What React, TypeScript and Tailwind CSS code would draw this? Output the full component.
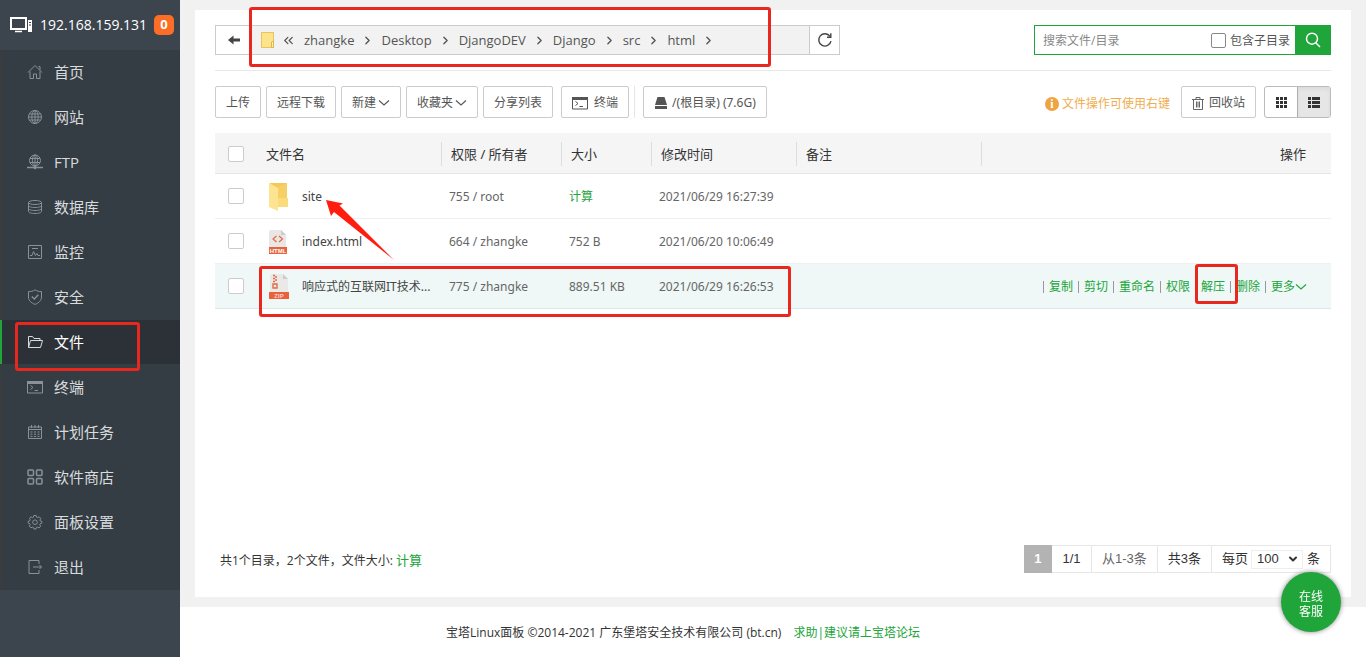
import { ReactNode } from "react";
import { ChevronDown, ChevronRight, ChevronsLeft } from "lucide-react";
import clsx from "clsx";

type IconProps = { className?: string; children?: ReactNode };

const LineIcon: React.FC<IconProps> = ({ className, children }) => (
  <svg
    viewBox="0 0 16 16"
    fill="none"
    stroke="currentColor"
    className={clsx("h-4 w-4 shrink-0", className)}
    aria-hidden="true"
  >
    {children}
  </svg>
);

const HomeIcon = () => (
  <LineIcon>
    <path d="M1 8.5 8 1.5l7 7M3 7.5v7h3.5V10h3v4.5H13v-7M11.5 2.5H13V6" />
  </LineIcon>
);

const GlobeIcon = () => (
  <LineIcon>
    <circle cx="8" cy="8" r="6.5" />
    <ellipse cx="8" cy="8" rx="3.2" ry="6.5" />
    <path d="M8 1.5v13M1.5 8h13M2.5 5h11M2.5 11h11" />
  </LineIcon>
);

const FtpIcon = () => (
  <LineIcon>
    <circle cx="8" cy="6.5" r="5.5" />
    <ellipse cx="8" cy="6.5" rx="2.6" ry="5.5" />
    <path d="M8 1v12M3 4.500h10M3 8.500h10" />
    <path d="M0 13.500h16" strokeWidth="1.500" />
    <circle cx="8" cy="13.500" r="1.300" fill="currentColor" />
  </LineIcon>
);

const DatabaseIcon = () => (
  <LineIcon>
    <ellipse cx="8" cy="3.500" rx="6.500" ry="2" />
    <path d="M1.500 3.500v9c0 1.200 3 2 6.500 2s6.500-.8 6.500-2v-9M1.500 6.500c0 1.200 3 2 6.500 2s6.500-.8 6.500-2M1.500 9.500c0 1.200 3 2 6.500 2s6.500-.8 6.500-2" />
  </LineIcon>
);

const MonitorIcon = () => (
  <LineIcon>
    <path d="M1.500 1.500h13v13h-13zM5 4.500h6M3 11.500h2l1.500-4 2 4 1.500-2 1 2h2" />
  </LineIcon>
);

const ShieldIcon = () => (
  <LineIcon>
    <path d="M8 .8C6 2.200 4 2.600 1.500 2.600V8c0 3.500 2.500 5.800 6.500 7.400 4-1.600 6.500-3.900 6.500-7.400V2.600C12 2.600 10 2.200 8 .8z" />
    <path d="m4.800 7.600 2.500 2.400 4-4.300" strokeWidth="1.400" />
  </LineIcon>
);

const FolderOpenIcon = () => (
  <LineIcon>
    <path d="M1.500 13.500v-11h4l1.500 2h6v2M1.500 13.500l2-7h12l-2 7z" />
  </LineIcon>
);

const TerminalIcon: React.FC<IconProps> = ({ className }) => (
  <LineIcon className={className}>
    <path d="M.5 2.500h15v11.500H.5z" />
    <path d="M0 3.500h16" strokeWidth="3" />
    <path d="m3.500 6.500 2.500 2-2.500 2M7.500 11.500H11" />
  </LineIcon>
);

const CalendarIcon = () => (
  <LineIcon>
    <path d="M1.500 3h13v11.500h-13zM1.500 5.500h13M4.500 1v3M8 1v3M11.500 1v3" />
    <path d="M3.500 8h9M3.500 10.200h9M3.500 12.400h9" strokeDasharray="2 1.500" />
  </LineIcon>
);

const AppsIcon = () => (
  <LineIcon>
    <g strokeWidth="1.500">
      <rect x="1" y="1" width="5.500" height="5.500" rx="1" />
      <rect x="9.500" y="1" width="5.500" height="5.500" rx="1" />
      <rect x="1" y="9.500" width="5.500" height="5.500" rx="1" />
      <rect x="9.500" y="9.500" width="5.500" height="5.500" rx="1" />
    </g>
  </LineIcon>
);

const GearIcon = () => (
  <LineIcon>
    <path d="M6.800 1.500h2.400l.4 1.700 1 .5 1.600-.9 1.600 1.700-.9 1.500.4 1 1.500.4v1.700l-1.600.6-.4 1 .8 1.600-1.500 1.600-1.600-.9-1 .4-.5 1.600H6.900l-.4-1.600-1.100-.4-1.500.8-1.600-1.600.9-1.500-.5-1.100-1.500-.5V7.300l1.600-.5.400-1-.8-1.500L4 2.800l1.500.8 1-.4z" />
    <circle cx="8" cy="8.200" r="2.300" />
  </LineIcon>
);

const ExitIcon = () => (
  <LineIcon>
    <path d="M12 5V1.500H2v13h10V11M6 8h8.500M12.500 6l2 2-2 2" />
  </LineIcon>
);

const ServerIcon = () => (
  <svg viewBox="0 0 24 18" className="h-[18px] w-6 shrink-0" aria-hidden="true">
    <rect x="1" y="2" width="15" height="11" fill="none" stroke="white" strokeWidth="2" />
    <path d="M5 15.500h7" stroke="white" strokeWidth="1.500" />
    <rect x="18" y="4" width="4" height="12" fill="white" />
    <path d="M19 6.500h2M19 9h2" stroke="#3c444d" />
  </svg>
);

const CaretIcon: React.FC<IconProps> = ({ className }) => (
  <svg
    viewBox="0 0 12 12"
    fill="none"
    stroke="currentColor"
    strokeWidth="1.100"
    className={clsx("h-3 w-3 shrink-0", className)}
    aria-hidden="true"
  >
    <path d="m1 3.500 5 4.500 5-4.500" />
  </svg>
);

const TrashIcon = () => (
  <svg viewBox="0 0 12 14" fill="none" stroke="#666" className="h-[14px] w-3" aria-hidden="true">
    <path d="M0 3.500h12M4 3.500v-2h4v2M1.500 3.500v10h9v-10M4.500 5.500v6M6 5.500v6M7.500 5.500v6" />
  </svg>
);

const DiskIcon = () => (
  <svg viewBox="0 0 14 14" fill="#555" className="h-[14px] w-[14px]" aria-hidden="true">
    <path d="M3.500 1h7L13 9H1zM1 10h12v3H1z" />
  </svg>
);

const RefreshIcon = () => (
  <svg viewBox="0 0 16 16" fill="none" stroke="#444" strokeWidth="1.400" className="h-4 w-4" aria-hidden="true">
    <path d="M14 9.200A6.200 6.200 0 1 1 13 4.300" />
    <path d="M13.800 1.300v3.900H10" />
  </svg>
);

const BackIcon = () => (
  <svg viewBox="0 0 12 10" fill="#444" className="h-[10px] w-3" aria-hidden="true">
    <path d="M0 5 5.500.5v3H12v3H5.500v3z" />
  </svg>
);

const SearchIcon = () => (
  <svg viewBox="0 0 16 16" fill="none" stroke="white" strokeWidth="1.500" className="h-4 w-4" aria-hidden="true">
    <circle cx="7" cy="6.700" r="5.500" />
    <path d="m11 11 4 4" />
  </svg>
);

const SmallFolderIcon = () => (
  <svg viewBox="0 0 13 16" className="h-4 w-[13px] shrink-0" aria-hidden="true">
    <rect x=".5" y=".5" width="12" height="15" fill="#fde38c" stroke="#e9c45b" />
    <path d="M10.500 15.500V10l2-1v6.500z" fill="#fff0b5" stroke="#dfb64b" />
  </svg>
);

const FolderIcon = () => (
  <svg viewBox="0 0 20 28" className="h-7 w-5" aria-hidden="true">
    <path d="M1 0h17v16h1v8H5z" fill="#f3c95a" />
    <path d="M9 4 18 0v16H9z" fill="#f6cf66" />
    <path d="M9 15h10v9H9z" fill="#fbdc7c" />
    <path d="M0 0 9 5v23l-9-4z" fill="#fde491" />
  </svg>
);

const HtmlFileIcon = () => (
  <svg viewBox="0 0 18 24" className="h-6 w-[18px]" aria-hidden="true">
    <path d="M0 2a2 2 0 0 1 2-2h10l5 5v12H0z" fill="#e9e7e6" />
    <path d="M12 0v5h5z" fill="#cfcccb" />
    <path d="M7.500 6 4 9l3.500 3M10 6l3.500 3-3.500 3" fill="none" stroke="#e66a45" strokeWidth="1.200" />
    <path d="M0 17h18v7H0z" fill="#e8623c" />
    <text x="9" y="23" textAnchor="middle" fontSize="6" fontWeight="700" fill="white" fontFamily="Liberation Sans, sans-serif">
      HTML
    </text>
  </svg>
);

const ZipFileIcon = () => (
  <svg viewBox="0 0 20 26" className="h-[26px] w-5" aria-hidden="true">
    <path d="M1 2a2 2 0 0 1 2-2h11l5 5v14H1z" fill="#e9e9e7" />
    <path d="M14 0v5h5z" fill="#cfcccb" />
    <path d="M4 1.500h2M6 3h2M4 4.500h2M6 6h2M4 7.500h2M4 10h4v4H4z" fill="none" stroke="#e66a45" strokeWidth="1.400" />
    <path d="M0 18h20v7H0z" fill="#e8623c" />
    <text x="10" y="24" textAnchor="middle" fontSize="6" fontWeight="700" fill="#fbd5c8" fontFamily="Liberation Sans, sans-serif">
      ZIP
    </text>
  </svg>
);

const Mark: React.FC<{ className: string }> = ({ className }) => (
  <div
    className={clsx(
      "pointer-events-none absolute z-10 rounded-[3px] border-3 border-[#e8281f]",
      className
    )}
  />
);

const menu = [
  { label: "首页", icon: <HomeIcon /> },
  { label: "网站", icon: <GlobeIcon /> },
  { label: "FTP", icon: <FtpIcon /> },
  { label: "数据库", icon: <DatabaseIcon /> },
  { label: "监控", icon: <MonitorIcon /> },
  { label: "安全", icon: <ShieldIcon /> },
  { label: "文件", icon: <FolderOpenIcon />, active: true },
  { label: "终端", icon: <TerminalIcon /> },
  { label: "计划任务", icon: <CalendarIcon /> },
  { label: "软件商店", icon: <AppsIcon /> },
  { label: "面板设置", icon: <GearIcon /> },
  { label: "退出", icon: <ExitIcon /> },
];

const Sidebar = () => (
  <aside className="w-[180px] shrink-0 bg-[#3c444d]">
    <div className="flex h-[50px] items-center pl-[10px] text-white">
      <ServerIcon />
      <span className="ml-[6px] w-[108px] text-sm">192.168.159.131</span>
      <span className="ml-[6px] flex h-5 w-5 items-center justify-center rounded-[5px] bg-[#fc6d26] text-[13px] font-bold">
        0
      </span>
    </div>
    <nav className="border-l-2 border-[#3a3d40] bg-[#353d44]">
      {menu.map((item) => (
        <div key={item.label} className="relative -ml-[2px] h-[45px]">
          <a
            href="#"
            className={clsx(
              "flex h-11 items-center gap-[11px] border-l-2 pl-[25px] text-[15px]",
              item.active
                ? "border-[#20a53a] bg-[#2c3138] text-white"
                : "border-transparent text-[#d8dbde]"
            )}
          >
            <span className={item.active ? "text-[#d8dbde]" : "text-[#8a9198]"}>
              {item.icon}
            </span>
            {item.label}
          </a>
          {item.active && <Mark className="top-[2px] left-[15px] h-[49px] w-[125px]" />}
        </div>
      ))}
    </nav>
  </aside>
);

const crumbs = ["zhangke", "Desktop", "DjangoDEV", "Django", "src", "html"];

const PathBar = () => (
  <div className="flex items-center justify-between border-b border-[#e8e8e8] pb-[15px]">
    <div className="relative flex h-[30px] w-[625px] border border-[#ccc]">
      <button aria-label="返回" className="flex w-9 items-center justify-center border-r border-[#ccc]">
        <BackIcon />
      </button>
      <div className="flex flex-1 items-center bg-[#f2f2f2] pl-[9px] text-[13px] text-[#555]">
        <SmallFolderIcon />
        <ChevronsLeft className="mr-2 ml-[7px] h-[15px] w-[15px]" />
        {crumbs.map((name) => (
          <span key={name} className="flex items-center">
            <a href="#" className="pt-px">
              {name}
            </a>
            <ChevronRight className="mx-[7px] h-[13px] w-[13px]" strokeWidth={2.5} />
          </span>
        ))}
      </div>
      <button aria-label="刷新" className="flex w-[30px] items-center justify-center border-l border-[#ccc]">
        <RefreshIcon />
      </button>
      <Mark className="-top-[19px] left-[33px] h-[60px] w-[522px]" />
    </div>

    <form className="flex h-[30px] w-[297px]">
      <div className="flex min-w-0 flex-1 items-center border border-r-0 border-[#20a53a] pr-[5px]">
        <input
          type="text"
          aria-label="搜索文件/目录"
          placeholder="搜索文件/目录"
          className="min-w-0 flex-1 pt-[2px] pl-2 text-xs outline-none placeholder:text-[#888]"
        />
        <input
          id="subdir"
          type="checkbox"
          className="h-[15px] w-[15px] appearance-none rounded-[2px] border border-[#888] bg-white"
        />
        <label htmlFor="subdir" className="ml-1 pt-[2px] text-xs text-[#555]">
          包含子目录
        </label>
      </div>
      <button type="button" aria-label="搜索" className="flex w-9 items-center justify-center bg-[#20a53a]">
        <SearchIcon />
      </button>
    </form>
  </div>
);

const ToolButton: React.FC<{ children: ReactNode; className?: string }> = ({
  children,
  className,
}) => (
  <button
    className={clsx(
      "flex h-8 items-center rounded-[2px] border border-[#ccc] bg-white px-[10px] pt-px text-xs whitespace-nowrap text-[#555]",
      className
    )}
  >
    {children}
  </button>
);

const GridIcon = () => (
  <svg viewBox="0 0 11 11" fill="#333" className="h-[11px] w-[11px]" aria-hidden="true">
    <path d="M0 0h3v3H0zM4 0h3v3H4zM8 0h3v3H8zM0 4h3v3H0zM4 4h3v3H4zM8 4h3v3H8zM0 8h3v3H0zM4 8h3v3H4zM8 8h3v3H8z" />
  </svg>
);

const ListIcon = () => (
  <svg viewBox="0 0 12 11" fill="#333" className="h-[11px] w-3" aria-hidden="true">
    <path d="M0 0h3v3H0zM4 0h8v3H4zM0 4h3v3H0zM4 4h8v3H4zM0 8h3v3H0zM4 8h8v3H4z" />
  </svg>
);

const Toolbar = () => (
  <div className="flex justify-between pt-[15px] pb-[15px]">
    <div className="flex items-center">
      <div className="flex gap-[5px]">
        <ToolButton>上传</ToolButton>
        <ToolButton>远程下载</ToolButton>
        <ToolButton>
          新建
          <CaretIcon className="ml-[2px]" />
        </ToolButton>
        <ToolButton>
          收藏夹
          <CaretIcon className="ml-[2px]" />
        </ToolButton>
        <ToolButton>分享列表</ToolButton>
      </div>
      <ToolButton className="ml-2">
        <TerminalIcon className="mr-[6px]" />
        终端
      </ToolButton>
      <div className="mr-2 ml-[5px] h-8 w-px bg-[#e6e6e6]" />
      <ToolButton>
        <DiskIcon />
        <span className="ml-1 font-['Noto_Sans','Noto_Sans_CJK_SC',sans-serif]">/(根目录) (7.6G)</span>
      </ToolButton>
    </div>
    <div className="flex items-center">
      <span className="flex items-center gap-[3px] pt-[3px] text-xs text-[#f0ad4e]">
        <span className="flex h-[14px] w-[14px] items-center justify-center rounded-full bg-[#f0a341] font-['Liberation_Serif',serif] text-[12px] font-bold text-white">
          i
        </span>
        文件操作可使用右键
      </span>
      <ToolButton className="ml-[11px] gap-[5px]">
        <TrashIcon />
        回收站
      </ToolButton>
      <div className="ml-2 flex h-8 overflow-hidden rounded-[3px] border border-[#bbb]">
        <button aria-label="图标视图" className="flex w-8 items-center justify-center">
          <GridIcon />
        </button>
        <button
          aria-label="列表视图"
          className="flex w-[33px] items-center justify-center border-l border-[#adadad] bg-[#e6e6e6] inset-shadow-sm"
        >
          <ListIcon />
        </button>
      </div>
    </div>
  </div>
);

type FileRow = {
  name: string;
  icon: ReactNode;
  owner: string;
  size: ReactNode;
  time: string;
  hovered?: boolean;
};

const files: FileRow[] = [
  {
    name: "site",
    icon: <FolderIcon />,
    owner: "755 / root",
    size: (
      <a href="#" className="text-[#20a53a]">
        计算
      </a>
    ),
    time: "2021/06/29 16:27:39",
  },
  {
    name: "index.html",
    icon: <HtmlFileIcon />,
    owner: "664 / zhangke",
    size: "752 B",
    time: "2021/06/20 10:06:49",
  },
  {
    name: "响应式的互联网IT技术...",
    icon: <ZipFileIcon />,
    owner: "775 / zhangke",
    size: "889.51 KB",
    time: "2021/06/29 16:26:53",
    hovered: true,
  },
];

const actions = ["复制", "剪切", "重命名", "权限", "解压", "删除", "更多"];

const Check: React.FC<{ label: string }> = ({ label }) => (
  <input
    type="checkbox"
    aria-label={label}
    className="block h-4 w-4 appearance-none rounded-[2px] border border-[#ccc] bg-white"
  />
);

const HeadCell: React.FC<{ children?: ReactNode; className?: string }> = ({
  children,
  className,
}) => (
  <th className="p-0 pt-[3px] font-normal">
    <div className={clsx("h-6 border-l border-[#ddd] pl-[9px] text-left leading-6", className)}>
      {children}
    </div>
  </th>
);

const RowActions = () => (
  <div className="flex items-center justify-end">
    {actions.map((action) => (
      <span key={action} className="relative flex items-center">
        <span className="mx-[5px] h-3 w-px bg-[#999]" />
        <a href="#" className="flex items-center text-[#20a53a]">
          {action}
          {action === "更多" && <CaretIcon />}
        </a>
        {action === "解压" && <Mark className="-top-[15px] left-[5px] h-10 w-[43px]" />}
      </span>
    ))}
  </div>
);

const FileTable = () => (
  <div className="relative">
    <table className="w-full table-fixed border-collapse font-['Noto_Sans','Noto_Sans_CJK_SC',sans-serif] text-xs text-[#666]">
      <colgroup>
        <col className="w-[41px]" />
        <col className="w-[185px]" />
        <col className="w-[120px]" />
        <col className="w-[90px]" />
        <col className="w-[145px]" />
        <col className="w-[185px]" />
        <col />
      </colgroup>
      <thead>
        <tr className="h-10 border-b border-[#e6e6e6] bg-[#f5f5f5] text-[13px] text-[#333]">
          <th className="pt-[3px] pl-[13px]">
            <Check label="全选" />
          </th>
          <th className="pt-[3px] pl-[10px] text-left font-normal">文件名</th>
          <HeadCell>权限 / 所有者</HeadCell>
          <HeadCell>大小</HeadCell>
          <HeadCell>修改时间</HeadCell>
          <HeadCell>备注</HeadCell>
          <HeadCell className="flex justify-end pr-[25px]">操作</HeadCell>
        </tr>
      </thead>
      <tbody>
        {files.map((file) => (
          <tr
            key={file.name}
            className={clsx(
              "h-[45px] border-b",
              file.hovered ? "border-[#d9ebe8] bg-[#eff8f6]" : "border-[#f0f0f0]"
            )}
          >
            <td className="pl-[13px]">
              <Check label={file.name} />
            </td>
            <td className="p-0 pt-[2px] pl-[13px]">
              <div className="flex items-center whitespace-nowrap">
                <span className="flex w-[33px]">{file.icon}</span>
                <a href="#" className="text-[#444]">
                  {file.name}
                </a>
              </div>
            </td>
            <td className="p-0 pt-[2px] pl-2">{file.owner}</td>
            <td className="p-0 pt-[2px] pl-2">{file.size}</td>
            <td className="p-0 pt-[2px] pl-2">{file.time}</td>
            <td className="p-0" />
            <td className="p-0 pt-[2px] pr-6">{file.hovered && <RowActions />}</td>
          </tr>
        ))}
      </tbody>
    </table>
    <Mark className="top-[133px] left-[44px] h-[51px] w-[532px]" />
    <svg
      viewBox="0 0 70 60"
      className="pointer-events-none absolute top-[67px] left-[110px] h-[60px] w-[70px]"
      aria-hidden="true"
    >
      <path d="M1 0 18 3.500 14.500 5.500 69 60 9 12 6 16z" fill="#ff1d10" />
    </svg>
  </div>
);

const Pager = () => (
  <div className="flex items-center justify-between pl-[5px]">
    <p className="pt-[3px] text-xs text-[#333]">
      共1个目录，2个文件，文件大小:{" "}
      <a href="#" className="text-[13px] text-[#20a53a]">
        计算
      </a>
    </p>
    <div className="flex h-7 border border-l-0 border-[#e6e6e6] font-['Liberation_Sans','Noto_Sans_CJK_SC',sans-serif] text-[13px] text-[#333]">
      <span className="-my-px flex w-7 items-center justify-center bg-[#b3b3b3] font-bold text-white">1</span>
      <span className="flex w-10 items-center justify-center border-r border-[#e6e6e6]">1/1</span>
      <span className="flex w-[66px] items-center justify-center border-r border-[#e6e6e6] text-[#666]">
        从1-3条
      </span>
      <span className="flex w-[54px] items-center justify-center border-r border-[#e6e6e6]">共3条</span>
      <label className="flex items-center pr-[10px] pl-[10px]">
        每页
        <span className="relative mr-1 ml-[3px] flex items-center">
          <select
            defaultValue="100"
            className="h-[19px] w-[52px] appearance-none border border-[#eee] bg-white pl-[5px] text-[13px] leading-4"
          >
            <option>100</option>
            <option>200</option>
            <option>500</option>
          </select>
          <ChevronDown className="pointer-events-none absolute right-1 h-3 w-3" strokeWidth={4} />
        </span>
        条
      </label>
    </div>
  </div>
);

const App = () => (
  <div className="flex min-h-screen bg-white font-['Open_Sans','Noto_Sans_CJK_SC',sans-serif]">
    <Sidebar />
    <div className="flex min-w-0 flex-1 flex-col">
      <main className="flex flex-1 flex-col bg-[#f1f1f1] px-[15px] py-[10px]">
        <div className="flex flex-1 flex-col bg-white px-5 pt-[15px] pb-6">
          <PathBar />
          <Toolbar />
          <FileTable />
          <div className="flex-1" />
          <Pager />
        </div>
      </main>
      <footer className="flex h-[50px] items-center justify-center gap-3 pt-[2px] pr-[180px] text-xs text-[#333]">
        <span>宝塔Linux面板 ©2014-2021 广东堡塔安全技术有限公司 (bt.cn)</span>
        <a href="#" className="text-[#20a53a]">
          求助|建议请上宝塔论坛
        </a>
      </footer>
    </div>
    <button className="fixed right-[25px] bottom-[25px] z-20 h-[60px] w-[60px] rounded-full bg-[#20a53a] px-4 pt-1 text-xs leading-[15px] text-white shadow-[0_0_5px_#888]">
      在线客服
    </button>
  </div>
);

export default App;
